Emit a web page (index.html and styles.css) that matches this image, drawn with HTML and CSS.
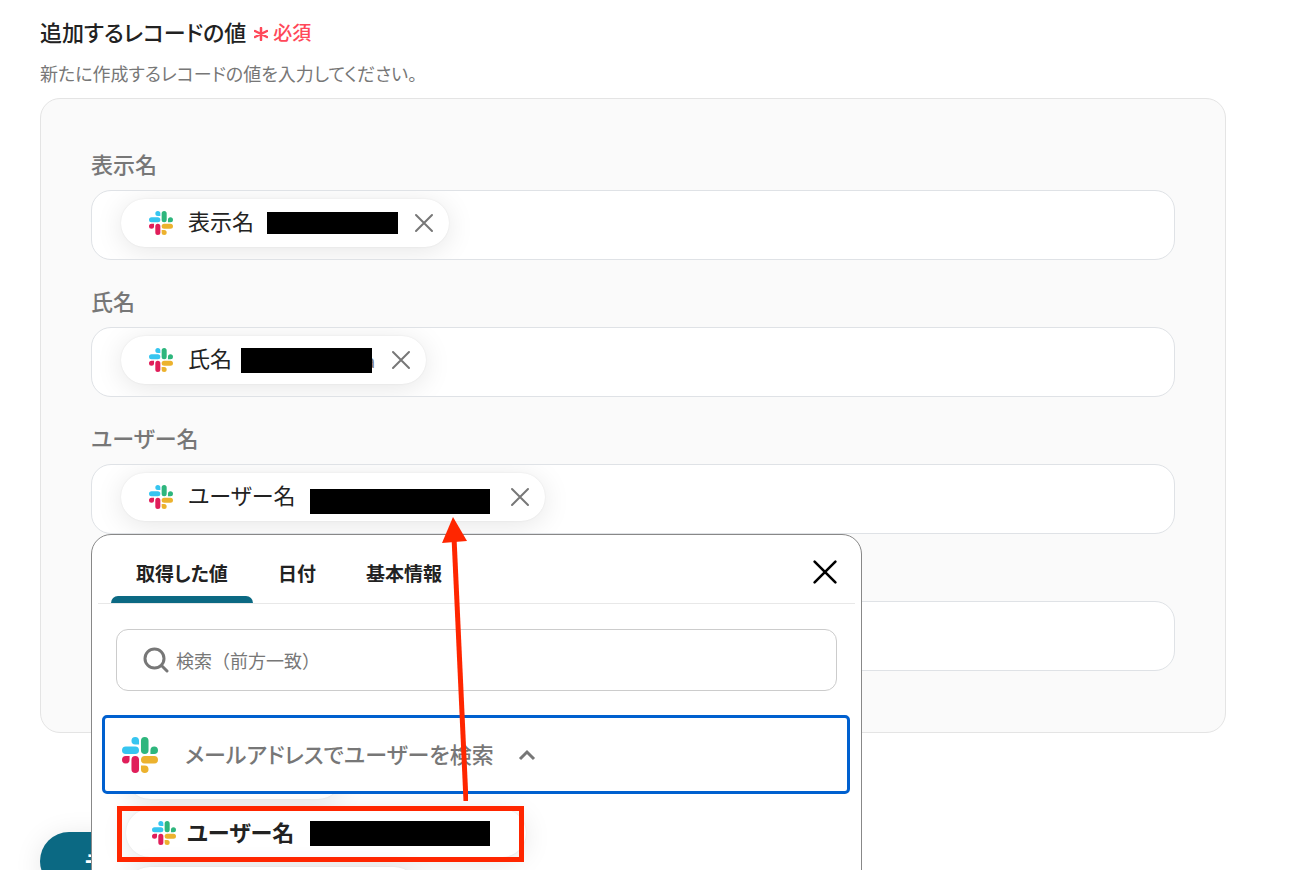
FILE: index.html
```html
<!DOCTYPE html>
<html lang="ja">
<head>
    <meta charset="UTF-8" />
    <meta name="viewport" content="width=device-width, initial-scale=1.0" />
    <title>追加するレコードの値</title>
    <link rel="stylesheet" href="styles.css">
</head>
<body>
    <svg class="defs" aria-hidden="true">
        <symbol id="slack" viewBox="0 0 24 24">
            <path fill="#e01e5a" d="M5.042 15.165a2.528 2.528 0 0 1-2.52 2.523A2.528 2.528 0 0 1 0 15.165a2.527 2.527 0 0 1 2.522-2.52h2.52v2.52zM6.313 15.165a2.527 2.527 0 0 1 2.521-2.52 2.527 2.527 0 0 1 2.521 2.52v6.313A2.528 2.528 0 0 1 8.834 24a2.528 2.528 0 0 1-2.521-2.522v-6.313z" />
            <path fill="#36c5f0" d="M8.834 5.042a2.528 2.528 0 0 1-2.521-2.52A2.528 2.528 0 0 1 8.834 0a2.528 2.528 0 0 1 2.521 2.522v2.52H8.834zM8.834 6.313a2.528 2.528 0 0 1 2.521 2.521 2.528 2.528 0 0 1-2.521 2.521H2.522A2.528 2.528 0 0 1 0 8.834a2.528 2.528 0 0 1 2.522-2.521h6.312z" />
            <path fill="#2eb67d" d="M18.956 8.834a2.528 2.528 0 0 1 2.522-2.521A2.528 2.528 0 0 1 24 8.834a2.528 2.528 0 0 1-2.522 2.521h-2.522V8.834zM17.688 8.834a2.528 2.528 0 0 1-2.523 2.521 2.527 2.527 0 0 1-2.52-2.521V2.522A2.527 2.527 0 0 1 15.165 0a2.528 2.528 0 0 1 2.523 2.522v6.312z" />
            <path fill="#ecb22e" d="M15.165 18.956a2.528 2.528 0 0 1 2.523 2.522A2.528 2.528 0 0 1 15.165 24a2.527 2.527 0 0 1-2.52-2.522v-2.522h2.52zM15.165 17.688a2.527 2.527 0 0 1-2.52-2.523 2.526 2.526 0 0 1 2.52-2.52h6.313A2.527 2.527 0 0 1 24 15.165a2.528 2.528 0 0 1-2.522 2.523h-6.313z" />
        </symbol>
        <symbol id="cross" viewBox="0 0 20 20">
            <path d="M2 2l16 16M18 2L2 18" fill="none" stroke="currentColor" stroke-width="2" stroke-linecap="round" />
        </symbol>
    </svg>

    <main>
        <h1>
            追加するレコードの値
            <span class="required">
                <svg class="asterisk" viewBox="0 0 14 14" aria-hidden="true">
                    <path d="M7 1v12M1 4l12 6M13 4L1 10" fill="none" stroke="currentColor" stroke-width="2.500" stroke-linecap="round" />
                </svg>
                必須
            </span>
        </h1>
        <p class="description">新たに作成するレコードの値を入力してください。</p>

        <section class="panel">
            <div class="field">
                <h2>表示名</h2>
                <div class="box">
                    <div class="chip">
                        <svg class="logo"><use href="#slack" /></svg>
                        <span class="name">表示名</span>
                        <span class="mask mask-display"></span>
                        <button type="button" class="remove" aria-label="削除"><svg><use href="#cross" /></svg></button>
                    </div>
                </div>
            </div>

            <div class="field">
                <h2>氏名</h2>
                <div class="box">
                    <div class="chip">
                        <svg class="logo"><use href="#slack" /></svg>
                        <span class="name">氏名</span>
                        <span class="mask mask-name"></span>
                        <span class="tail">a</span>
                        <button type="button" class="remove" aria-label="削除"><svg><use href="#cross" /></svg></button>
                    </div>
                </div>
            </div>

            <div class="field">
                <h2>ユーザー名</h2>
                <div class="box">
                    <div class="chip">
                        <svg class="logo"><use href="#slack" /></svg>
                        <span class="name">ユーザー名</span>
                        <span class="mask mask-user"></span>
                        <button type="button" class="remove" aria-label="削除"><svg><use href="#cross" /></svg></button>
                    </div>
                </div>

                <!-- 値の選択メニュー -->
                <div class="picker">
                    <div class="tabs">
                        <button type="button" class="tab active">取得した値</button>
                        <button type="button" class="tab">日付</button>
                        <button type="button" class="tab">基本情報</button>
                        <button type="button" class="close" aria-label="閉じる"><svg><use href="#cross" /></svg></button>
                    </div>

                    <label class="search">
                        <svg viewBox="0 0 26 26" aria-hidden="true">
                            <path d="M11.500 2a9.500 9.500 0 1 0 0 19a9.500 9.500 0 1 0 0-19zM18.500 18.500l5.500 5.500" fill="none" stroke="currentColor" stroke-width="3" stroke-linecap="round" />
                        </svg>
                        <input type="text" placeholder="検索（前方一致）" aria-label="検索" />
                    </label>

                    <button type="button" class="group">
                        <svg class="group-logo"><use href="#slack" /></svg>
                        <span class="group-name">メールアドレスでユーザーを検索</span>
                        <svg class="caret" viewBox="0 0 18 12" aria-hidden="true">
                            <path d="M2 10l7-7 7 7" fill="none" stroke="currentColor" stroke-width="3" />
                        </svg>
                    </button>

                    <div class="values">
                        <div class="value value-before"></div>
                        <button type="button" class="value">
                            <svg class="logo"><use href="#slack" /></svg>
                            <span class="value-name">ユーザー名</span>
                            <span class="mask mask-value"></span>
                        </button>
                        <div class="value value-after"></div>
                        <div class="highlight"></div>
                    </div>

                    <svg class="arrow" viewBox="0 0 26 286" aria-hidden="true">
                        <path d="M12 20l12 264" fill="none" stroke="#ff2600" stroke-width="5" />
                        <path d="M11 0L0 26l25-2z" fill="#ff2600" />
                    </svg>
                </div>
            </div>

            <div class="field">
                <h2></h2>
                <input type="text" class="box" aria-label="メールアドレス" />
            </div>
        </section>

        <button type="button" class="test">テスト</button>
    </main>
</body>
</html>
```

FILE: styles.css
```css
* {
    box-sizing: border-box;
}

body {
    margin: 0;
    height: 100vh;
    overflow: hidden;
    font-family: "Noto Sans CJK JP", sans-serif;
    font-feature-settings: "palt";
    color: #222;
    background-color: #fff;
}

button,
input {
    font-family: inherit;
    font-feature-settings: inherit;
    color: inherit;
}

button {
    padding: 0;
    border: none;
    background: none;
    cursor: pointer;
}

svg {
    display: block;
    flex-shrink: 0;
}

.defs {
    position: absolute;
    width: 0;
    height: 0;
}

main {
    padding: 14px 64px 0 40px;
}

h1 {
    display: flex;
    align-items: center;
    gap: 8px;
    margin: 0;
    font-size: 22px;
    line-height: 32px;
    font-weight: 500;
}

.required {
    display: flex;
    align-items: center;
    gap: 5px;
    padding-top: 2px;
    font-size: 19px;
    color: #ff4859;
}

.asterisk {
    width: 14px;
    height: 14px;
    margin-top: 4px;
}

.description {
    margin: 13px 0;
    font-size: 18px;
    line-height: 24px;
    color: #777;
}

.panel {
    padding: 50px 50px 61px;
    border: 1px solid #e4e4e4;
    border-radius: 20px;
    background-color: #fafafa;
}

.field {
    position: relative;
    margin-bottom: 26px;
}

.field:last-child {
    margin-bottom: 0;
}

h2 {
    height: 28px;
    margin: 0 0 13px;
    font-size: 22px;
    line-height: 28px;
    font-weight: 500;
    color: #777;
}

.box {
    display: flex;
    align-items: flex-start;
    width: 100%;
    height: 70px;
    padding: 8px 29px;
    border: 1px solid #dfe2e6;
    border-radius: 20px;
    background-color: #fff;
    overflow: hidden;
}

.chip,
.value {
    display: flex;
    align-items: center;
    height: 48px;
    border-radius: 24px;
    background-color: #fff;
    box-shadow: 0 4px 28px rgba(0, 0, 0, 0.1), 0 0 2px rgba(0, 0, 0, 0.08);
    font-size: 22px;
    line-height: 32px;
}

.chip {
    padding: 0 15px 0 28px;
}

.name {
    padding-bottom: 6px;
}

.logo {
    width: 24px;
    height: 24px;
    margin-right: 15px;
}

.mask {
    height: 25px;
    background-color: #000;
}

.mask-display {
    width: 131px;
    height: 22px;
    margin: 0 16px 0 13px;
}

.mask-name {
    width: 131px;
    margin-left: 9px;
}

/* end of the value that the mask leaves visible */
.tail {
    display: flex;
    justify-content: flex-end;
    width: 3px;
    margin-right: 16px;
    overflow: hidden;
    font-size: 18px;
    color: #777;
}

.mask-user {
    width: 180px;
    margin: 8px 20px 0 14px;
}

.remove svg {
    width: 20px;
    height: 20px;
    color: #777;
}

.picker {
    position: absolute;
    top: 100%;
    left: 0;
    z-index: 1;
    width: 771px;
    height: 500px;
    padding: 0 6px;
    border: 1px solid #888;
    border-radius: 20px;
    background-color: #fff;
}

.tabs {
    display: flex;
    height: 69px;
    padding: 0 17px 0 13px;
    border-bottom: 1px solid #e8e8e8;
}

.tab {
    position: relative;
    padding: 6px 25px 0;
    font-size: 19px;
    font-weight: 700;
}

.tab.active::after {
    content: "";
    position: absolute;
    left: 0;
    right: 0;
    bottom: 0;
    height: 7px;
    border-radius: 7px 7px 0 0;
    background-color: #0b6983;
}

.close {
    margin-left: auto;
    padding-top: 6px;
    color: #000;
}

.close svg {
    width: 26px;
    height: 26px;
}

.search {
    display: flex;
    align-items: center;
    gap: 7px;
    height: 62px;
    margin: 25px 18px 24px;
    padding: 0 26px;
    border: 1px solid #ccc;
    border-radius: 12px;
    color: #777;
}

.search svg {
    width: 26px;
    height: 26px;
}

.search input {
    flex: 1;
    padding: 0;
    border: none;
    outline: none;
    background: none;
    font-size: 18px;
    font-feature-settings: normal;
    line-height: 28px;
}

.search input::placeholder {
    color: #777;
}

.group {
    position: relative;
    z-index: 1;
    display: flex;
    align-items: center;
    width: 748px;
    height: 79px;
    margin-left: 4px;
    padding: 0 17px;
    border: 3px solid #0060cf;
    border-radius: 5px;
    background-color: #fff;
    font-size: 22px;
    line-height: 32px;
    font-weight: 500;
    color: #777;
}

.group-logo {
    width: 36px;
    height: 36px;
    margin-right: 27px;
}

.group-name {
    padding-bottom: 4px;
}

.caret {
    width: 18px;
    height: 12px;
    margin-left: 24px;
}

.values {
    position: relative;
    display: flex;
    flex-direction: column;
    align-items: flex-start;
    gap: 10px;
    margin-top: -43px;
    padding-left: 28px;
}

.value {
    padding: 0 36px 0 26px;
    font-weight: 700;
}

.value .logo {
    margin-right: 11px;
}

.value-name {
    padding-bottom: 4px;
}

.value-before {
    width: 216px;
}

.value-after {
    width: 292px;
}

.mask-value {
    width: 180px;
    margin-left: 16px;
}

.highlight {
    position: absolute;
    top: 55px;
    left: 19px;
    width: 407px;
    height: 56px;
    border: 5px solid #ff2600;
}

.arrow {
    position: absolute;
    top: -18px;
    left: 350px;
    z-index: 2;
    width: 26px;
    height: 286px;
}

.test {
    height: 58px;
    margin-top: 99px;
    padding: 0 45px;
    border-radius: 29px;
    background-color: #0b6983;
    box-shadow: 0 4px 28px rgba(0, 0, 0, 0.1);
    font-size: 22px;
    font-weight: 700;
    color: #fff;
}
```
